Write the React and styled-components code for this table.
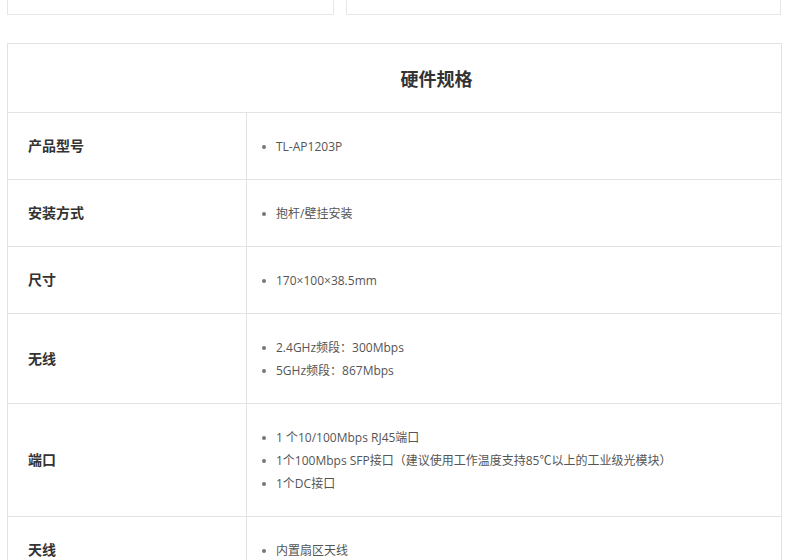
import React from "react";
import styled, { createGlobalStyle } from "styled-components";

const GlobalStyle = createGlobalStyle`
  html, body {
    margin: 0;
    padding: 0;
    background: #fff;
  }
  body {
    font-family: "Noto Sans CJK SC", "Noto Sans", sans-serif;
    color: #333;
  }
`;

const Page = styled.div`
  width: 790px;
  height: 560px;
  overflow: hidden;
  padding: 0 9px 0 7px;
  box-sizing: border-box;
`;

const TopRow = styled.div`
  display: flex;
  gap: 12px;
  height: 15px;
`;

const Panel = styled.div`
  width: ${(p) => p.width}px;
  box-sizing: border-box;
  border: 1px solid #e6e6e6;
  border-top: none;
`;

const SpecTable = styled.table`
  width: 774px;
  margin-top: 28px;
  border-collapse: collapse;
  table-layout: fixed;

  td, th {
    border: 1px solid #e3e3e3;
  }
`;

const Col = styled.col`
  width: ${(p) => p.width}px;
`;

const TitleCell = styled.th`
  height: 68px;
  padding: 0 0 0 84px;
  font-size: 18px;
  font-weight: 700;
  color: #333;
  text-align: center;
  vertical-align: middle;
  line-height: 24px;
`;

const LabelCell = styled.td`
  padding: 0 0 2px 20px;
  font-size: 14px;
  font-weight: 700;
  color: #333;
  vertical-align: middle;
`;

const ValueCell = styled.td`
  padding: 22px 0 21px 13px;
  vertical-align: middle;
`;

const List = styled.ul`
  list-style: none;
  margin: 0;
  padding: 0;
`;

const Item = styled.li`
  position: relative;
  padding-left: 16px;
  font-family: "Open Sans", "Noto Sans CJK SC", sans-serif;
  font-size: 12px;
  line-height: 23px;
  color: #555;
  white-space: nowrap;

  &::before {
    content: "";
    position: absolute;
    left: 2px;
    top: 10px;
    width: 4px;
    height: 4px;
    border-radius: 50%;
    background: #777;
  }
`;

const specs = [
  { label: "产品型号", values: ["TL-AP1203P"] },
  { label: "安装方式", values: ["抱杆/壁挂安装"] },
  { label: "尺寸", values: ["170×100×38.5mm"] },
  { label: "无线", values: ["2.4GHz频段：300Mbps", "5GHz频段：867Mbps"] },
  {
    label: "端口",
    values: [
      "1 个10/100Mbps RJ45端口",
      "1个100Mbps SFP接口（建议使用工作温度支持85℃以上的工业级光模块）",
      "1个DC接口",
    ],
  },
  { label: "天线", values: ["内置扇区天线"] },
];

export default function App() {
  return (
    <Page>
      <GlobalStyle />
      <TopRow>
        <Panel width={327} />
        <Panel width={435} />
      </TopRow>
      <SpecTable>
        <colgroup>
          <Col width={239} />
          <Col width={535} />
        </colgroup>
        <thead>
          <tr>
            <TitleCell colSpan={2}>硬件规格</TitleCell>
          </tr>
        </thead>
        <tbody>
          {specs.map((row) => (
            <tr key={row.label}>
              <LabelCell>{row.label}</LabelCell>
              <ValueCell>
                <List>
                  {row.values.map((v) => (
                    <Item key={v}>{v}</Item>
                  ))}
                </List>
              </ValueCell>
            </tr>
          ))}
        </tbody>
      </SpecTable>
    </Page>
  );
}
